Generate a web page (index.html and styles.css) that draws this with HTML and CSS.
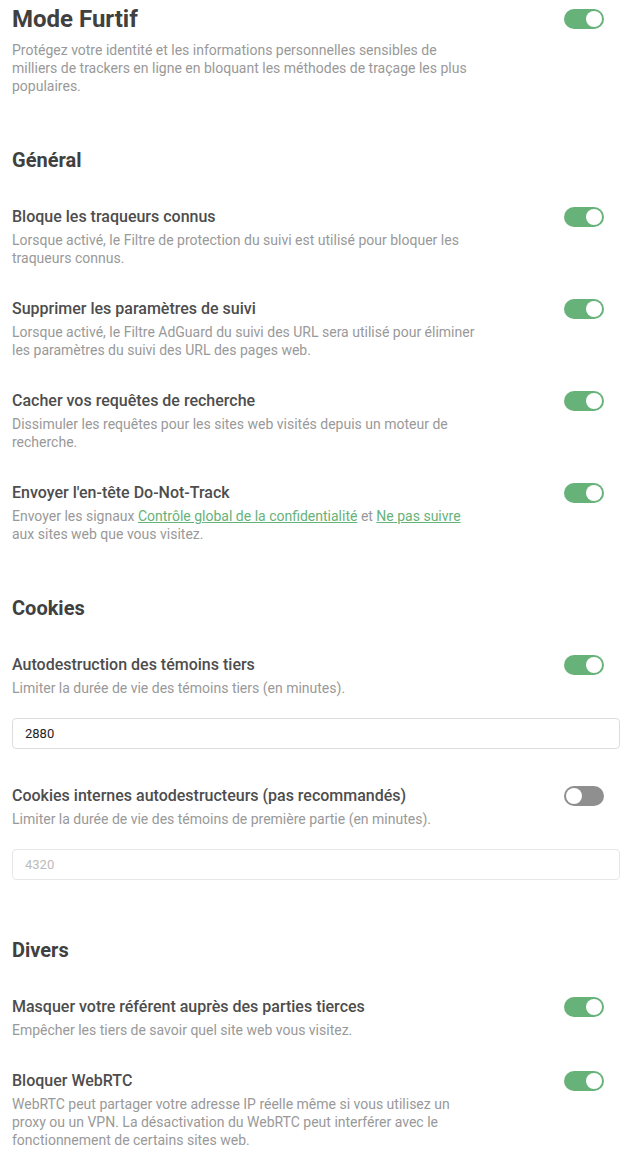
FILE: index.html
```html
<!DOCTYPE html>
<html lang="fr">

<head>
    <meta charset="UTF-8">
    <meta name="viewport" content="width=device-width, initial-scale=1.0">
    <title>Mode Furtif</title>
    <link rel="stylesheet" href="styles.css">
</head>

<body>
    <div class="page">

        <!-- En-tête -->
        <div class="row">
            <div class="text">
                <h1 class="page-title">Mode Furtif</h1>
                <p class="desc">Protégez votre identité et les informations personnelles sensibles de milliers de trackers en ligne en bloquant les méthodes de traçage les plus populaires.</p>
            </div>
            <span class="toggle on top"></span>
        </div>

        <h2 class="section">Général</h2>

        <div class="row item">
            <div class="text">
                <h3 class="item-title">Bloque les traqueurs connus</h3>
                <p class="desc">Lorsque activé, le Filtre de protection du suivi est utilisé pour bloquer les traqueurs connus.</p>
            </div>
            <span class="toggle on"></span>
        </div>

        <div class="row item">
            <div class="text">
                <h3 class="item-title">Supprimer les paramètres de suivi</h3>
                <p class="desc">Lorsque activé, le Filtre AdGuard du suivi des URL sera utilisé pour éliminer les paramètres du suivi des URL des pages web.</p>
            </div>
            <span class="toggle on"></span>
        </div>

        <div class="row item">
            <div class="text">
                <h3 class="item-title">Cacher vos requêtes de recherche</h3>
                <p class="desc">Dissimuler les requêtes pour les sites web visités depuis un moteur de recherche.</p>
            </div>
            <span class="toggle on"></span>
        </div>

        <div class="row item">
            <div class="text">
                <h3 class="item-title">Envoyer l'en-tête Do-Not-Track</h3>
                <p class="desc">Envoyer les signaux <a href="#">Contrôle global de la confidentialité</a> et <a href="#">Ne pas suivre</a> aux sites web que vous visitez.</p>
            </div>
            <span class="toggle on"></span>
        </div>

        <h2 class="section">Cookies</h2>

        <div class="row item">
            <div class="text">
                <h3 class="item-title">Autodestruction des témoins tiers</h3>
                <p class="desc">Limiter la durée de vie des témoins tiers (en minutes).</p>
            </div>
            <span class="toggle on"></span>
        </div>
        <input class="field" type="text" value="2880">

        <div class="row item">
            <div class="text">
                <h3 class="item-title">Cookies internes autodestructeurs (pas recommandés)</h3>
                <p class="desc">Limiter la durée de vie des témoins de première partie (en minutes).</p>
            </div>
            <span class="toggle"></span>
        </div>
        <input class="field" type="text" value="4320" disabled>

        <h2 class="section">Divers</h2>

        <div class="row item">
            <div class="text">
                <h3 class="item-title">Masquer votre référent auprès des parties tierces</h3>
                <p class="desc">Empêcher les tiers de savoir quel site web vous visitez.</p>
            </div>
            <span class="toggle on"></span>
        </div>

        <div class="row item">
            <div class="text">
                <h3 class="item-title">Bloquer WebRTC</h3>
                <p class="desc">WebRTC peut partager votre adresse IP réelle même si vous utilisez un proxy ou un VPN. La désactivation du WebRTC peut interférer avec le fonctionnement de certains sites web.</p>
            </div>
            <span class="toggle on"></span>
        </div>

    </div>
</body>

</html>
```

FILE: styles.css
```css
body {
    margin: 0;
    background: #fff;
    font-family: Roboto, "Noto Sans", sans-serif;
    color: #4d4d4d;
}

.page {
    display: flex;
    flex-direction: column;
    padding: 0 0 0 12px;
}

.row {
    display: flex;
    justify-content: space-between;
    align-items: flex-start;
}

.text {
    max-width: 472px;
}

.page-title {
    margin: 2px 0 5px;
    font-size: 24px;
    line-height: 34px;
    font-weight: 700;
    color: #404040;
}

.section {
    margin: 51px 0 1px;
    font-size: 20px;
    line-height: 28px;
    font-weight: 700;
    color: #404040;
}

.item {
    margin-top: 30px;
}

.item-title {
    margin: 0 0 2px;
    font-size: 16px;
    line-height: 24px;
    font-weight: 500;
    color: #4d4d4d;
}

.desc {
    margin: 0;
    font-size: 14px;
    line-height: 18px;
    color: #999;
}

.desc a {
    color: #67b279;
}

/* Interrupteurs */
.toggle {
    position: relative;
    flex: none;
    width: 40px;
    height: 20px;
    margin: 2px 16px 0 0;
    border-radius: 10px;
    background: #8f8f8f;
}

.toggle::after {
    content: "";
    position: absolute;
    top: 2px;
    left: 2px;
    width: 16px;
    height: 16px;
    border-radius: 50%;
    background: #fff;
}

.toggle.on {
    background: #67b279;
}

.toggle.on::after {
    left: 22px;
}

.toggle.top {
    margin-top: 9px;
}

.field {
    margin: 21px 0 5px;
    height: 31px;
    box-sizing: border-box;
    width: 608px;
    padding: 0 12px;
    border: 1px solid #ddd;
    border-radius: 4px;
    font-family: Roboto, sans-serif;
    font-size: 13px;
    color: #222;
    background: #fff;
}

.field:disabled {
    color: #bbb;
    border-color: #e6e6e6;
}
```
